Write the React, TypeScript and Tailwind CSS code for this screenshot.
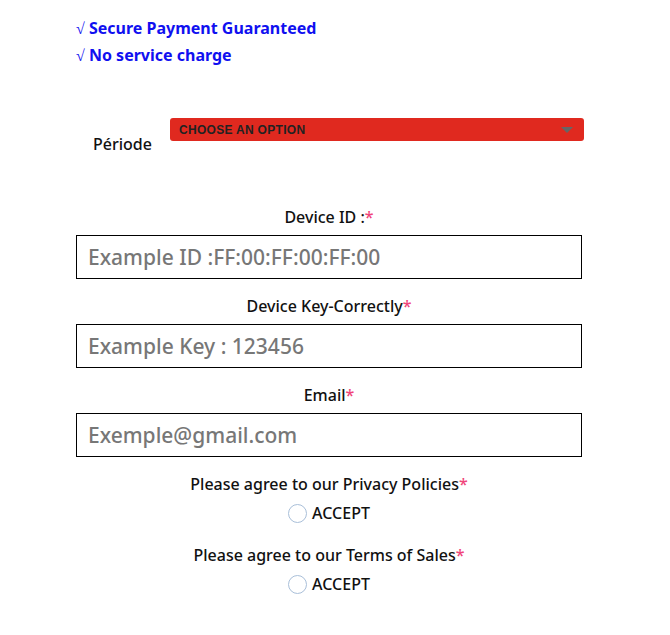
const Req = () => <span className="text-[#f0457a]">*</span>;

const Field = ({ label, placeholder, className = "" }: { label: string; placeholder: string; className?: string }) => (
  <div className={className}>
    <label className="block text-center text-[16px] leading-[24px] font-medium text-[#111]">
      {label}
      <Req />
    </label>
    <input
      placeholder={placeholder}
      className="mt-[6px] block w-full h-[44px] border border-black px-[11px] text-[21px] font-medium text-[#333] placeholder:text-[#777] outline-none"
    />
  </div>
);

const Accept = ({ label, className = "" }: { label: string; className?: string }) => (
  <div className={`flex flex-col items-center ${className}`}>
    <div className="text-[16px] leading-[24px] font-medium text-[#111]">
      {label}
      <Req />
    </div>
    <label className="mt-[5px] flex items-center gap-[5px] text-[16px] leading-[24px] font-medium text-[#111]">
      <span className="w-[19px] h-[19px] rounded-full border border-[#a9bfd9] bg-white" />
      ACCEPT
    </label>
  </div>
);

export default function App() {
  return (
    <div className="min-h-[635px] bg-white font-['Noto_Sans',sans-serif]">
      <div className="w-[506px] ml-[76px] pt-[15px]">
        <div className="text-[16px] leading-[26px] font-bold text-[#1010f0]">
          <div>
            <span className="font-['Liberation_Serif',serif] font-normal">√</span> Secure Payment Guaranteed
          </div>
          <div>
            <span className="font-['Liberation_Serif',serif] font-normal">√</span> No service charge
          </div>
        </div>

        <div className="mt-[49px] flex items-start">
          <div className="w-[94px] shrink-0 pl-[17px] mt-[14px] text-[16px] leading-[24px] font-medium text-[#111]">Période</div>
          <div className="relative shrink-0 w-[414px] h-[23px] rounded-[3px] bg-[#e0291f] flex items-center pl-[9px]">
            <span className="font-['Liberation_Sans',sans-serif] font-bold text-[12px] text-[#222] tracking-[0.3px]">
              CHOOSE AN OPTION
            </span>
            <span className="absolute right-[11px] top-[9px] w-0 h-0 border-l-[6px] border-r-[6px] border-t-[6px] border-l-transparent border-r-transparent border-t-[#666]" />
          </div>
        </div>

        <Field className="mt-[49px]" label="Device ID :" placeholder="Example ID :FF:00:FF:00:FF:00" />
        <Field className="mt-[15px]" label="Device Key-Correctly" placeholder="Example Key : 123456" />
        <Field className="mt-[15px]" label="Email" placeholder="Exemple@gmail.com" />

        <Accept className="mt-[15px]" label="Please agree to our Privacy Policies" />
        <Accept className="mt-[18px]" label="Please agree to our Terms of Sales" />
      </div>
    </div>
  );
}
